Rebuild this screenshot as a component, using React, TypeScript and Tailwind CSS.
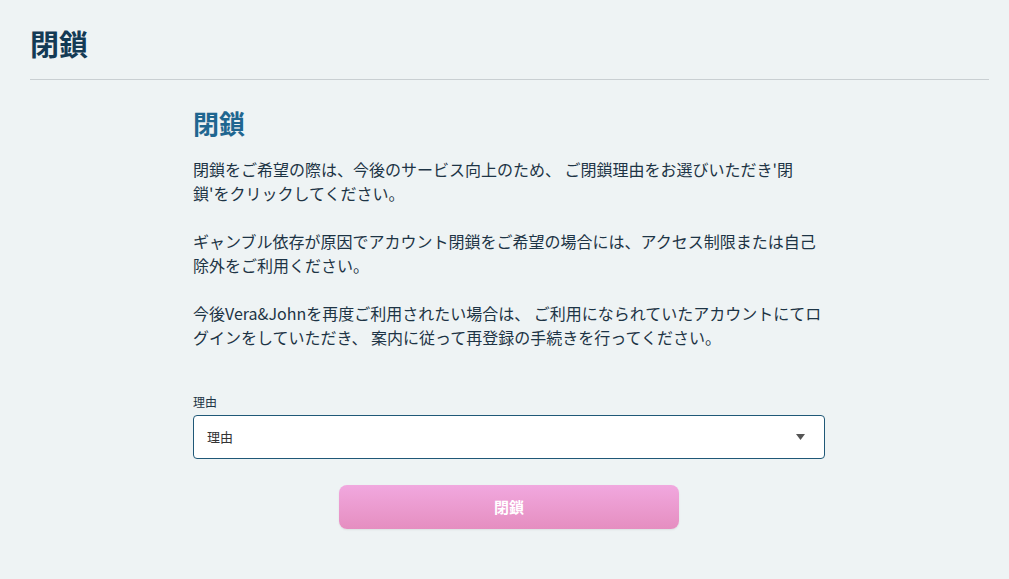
const font = { fontFamily: '"Noto Sans CJK JP", "Noto Sans", sans-serif' }

const paragraphs = [
  ["閉鎖をご希望の際は、今後のサービス向上のため、 ご閉鎖理由をお選びいただき'閉", "鎖'をクリックしてください。"],
  ['ギャンブル依存が原因でアカウント閉鎖をご希望の場合には、アクセス制限または自己', '除外をご利用ください。'],
  ['今後Vera&Johnを再度ご利用されたい場合は、 ご利用になられていたアカウントにてロ', 'グインをしていただき、 案内に従って再登録の手続きを行ってください。'],
]

export default function App() {
  return (
    <div className="min-h-[579px] w-full bg-[#eef3f4] [font-family:'Noto_Sans_CJK_JP','Noto_Sans',sans-serif]">
      <div className="ml-[30px] mr-[20px] border-b border-[#c9cfd2] pt-[22px] pb-[15px]">
        <h1 className="m-0 text-[29px] font-bold leading-[42px] text-[#133a55]">閉鎖</h1>
      </div>

      <div className="ml-[193px] w-[632px] pt-[24px]">
        <h2 className="m-0 text-[26px] font-bold leading-[38px] text-[#1f6690]">閉鎖</h2>

        <div className="mt-[15px] flex flex-col gap-[24px] text-[16px] leading-[24px] text-[#1d3445]">
          {paragraphs.map((p, i) => (
            <p key={i} className="m-0">
              {p.map((line, j) => (
                <span key={j} className="block whitespace-nowrap">{line}</span>
              ))}
            </p>
          ))}
        </div>

        <label className="mt-[45px] block text-[12px] leading-[16px] text-[#1d3445]">理由</label>
        <div className="mt-[5px] flex h-[44px] items-center justify-between rounded-[4px] border border-[#1f5877] bg-white pl-[13px] pr-[19px]">
          <span className="text-[13px] text-[#333]">理由</span>
          <svg width="9" height="6" viewBox="0 0 9 6">
            <path d="M0 0H9L4.5 6Z" fill="#555" />
          </svg>
        </div>

        <div className="mt-[26px] flex justify-center">
          <button
            className="h-[44px] w-[340px] rounded-[8px] bg-gradient-to-b from-[#f1a8df] to-[#e58ec0] text-[15px] font-bold text-white shadow-[0_1px_2px_rgba(0,0,0,0.08)]"
            style={font}
          >
            閉鎖
          </button>
        </div>
      </div>
    </div>
  )
}
